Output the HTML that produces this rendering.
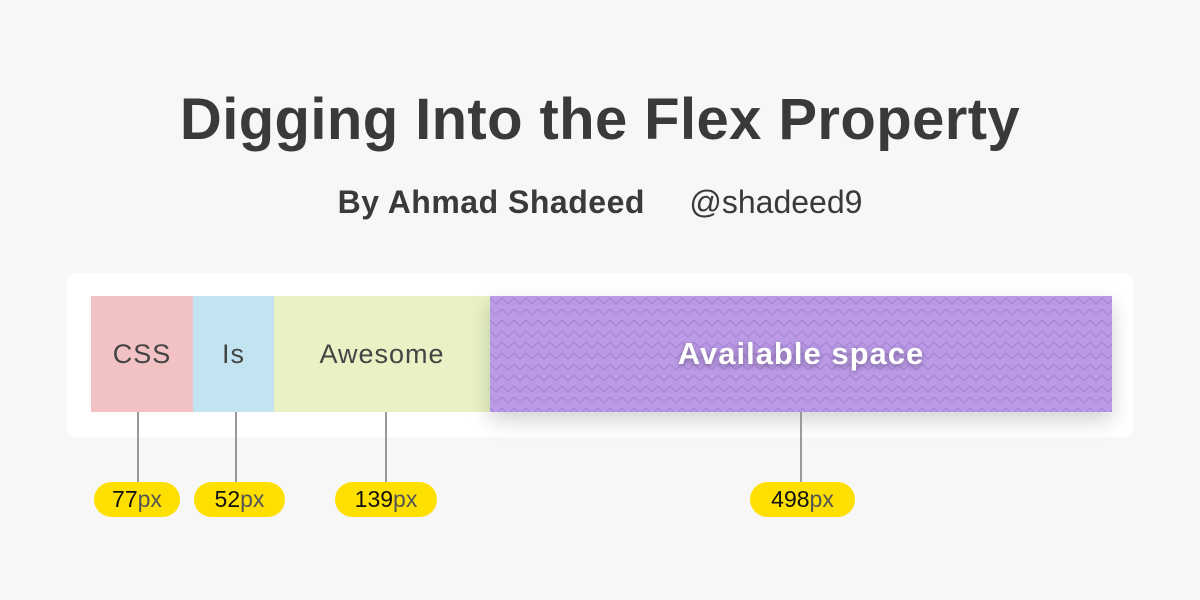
<!DOCTYPE html>
<html><head><style>
body{margin:0;width:1200px;height:600px;background:#f7f7f7;font-family:"Liberation Sans",sans-serif;position:relative;overflow:hidden}
.a{position:absolute}
h1{position:absolute;top:86px;left:0;width:1200px;text-align:center;margin:0;font-size:58px;font-weight:bold;color:#3a3a3a;letter-spacing:0.4px}
.sub{top:184px;left:0;width:1200px;text-align:center;font-size:32px;color:#3a3a3a}
.card{left:67px;top:273px;width:1066px;height:164px;background:#fff;border-radius:10px}
.bar{top:296px;height:116px;display:flex;align-items:center;justify-content:center;font-size:27px;letter-spacing:1px;color:#444}
.line{width:2px;background:#999;top:412px;height:70px}
.pill{top:482px;height:35px;border-radius:18px;background:#fee000;display:flex;align-items:center;justify-content:center;font-size:23px;color:#111}
.pill span{color:#555}
</style></head><body>
<h1>Digging Into the Flex Property</h1>
<div class="a sub"><b style="letter-spacing:0.5px">By Ahmad Shadeed</b>&nbsp;&nbsp;&nbsp;&nbsp;&nbsp;@shadeed9</div>
<div class="a card"></div>
<div class="a bar" style="left:91px;width:102px;background:#f2c1c3">CSS</div>
<div class="a bar" style="left:193px;width:81px;background:#c1e4f0">Is</div>
<div class="a bar" style="left:274px;width:216px;background:#e8f2c4">Awesome</div>
<div class="a bar" style="left:490px;width:622px;background:#bb9ae6;box-shadow:0 8px 20px rgba(0,0,0,.18);overflow:hidden">
<svg class="a" style="left:0;top:0" width="622" height="116"><defs><pattern id="z" width="12" height="11" patternUnits="userSpaceOnUse"><path d="M0 2 L6 8 L12 2" fill="none" stroke="#a584d4" stroke-width="1.1"/></pattern></defs><rect width="622" height="116" fill="url(#z)"/></svg>
<b style="position:relative;color:#fff;font-size:31px;letter-spacing:1px;text-shadow:0 2px 6px rgba(0,0,0,.35)">Available space</b></div>
<div class="a line" style="left:137px"></div>
<div class="a line" style="left:235px"></div>
<div class="a line" style="left:385px"></div>
<div class="a line" style="left:800px"></div>
<div class="a pill" style="left:94px;width:86px">77<span>px</span></div>
<div class="a pill" style="left:194px;width:91px">52<span>px</span></div>
<div class="a pill" style="left:335px;width:102px">139<span>px</span></div>
<div class="a pill" style="left:750px;width:105px">498<span>px</span></div>
</body></html>
